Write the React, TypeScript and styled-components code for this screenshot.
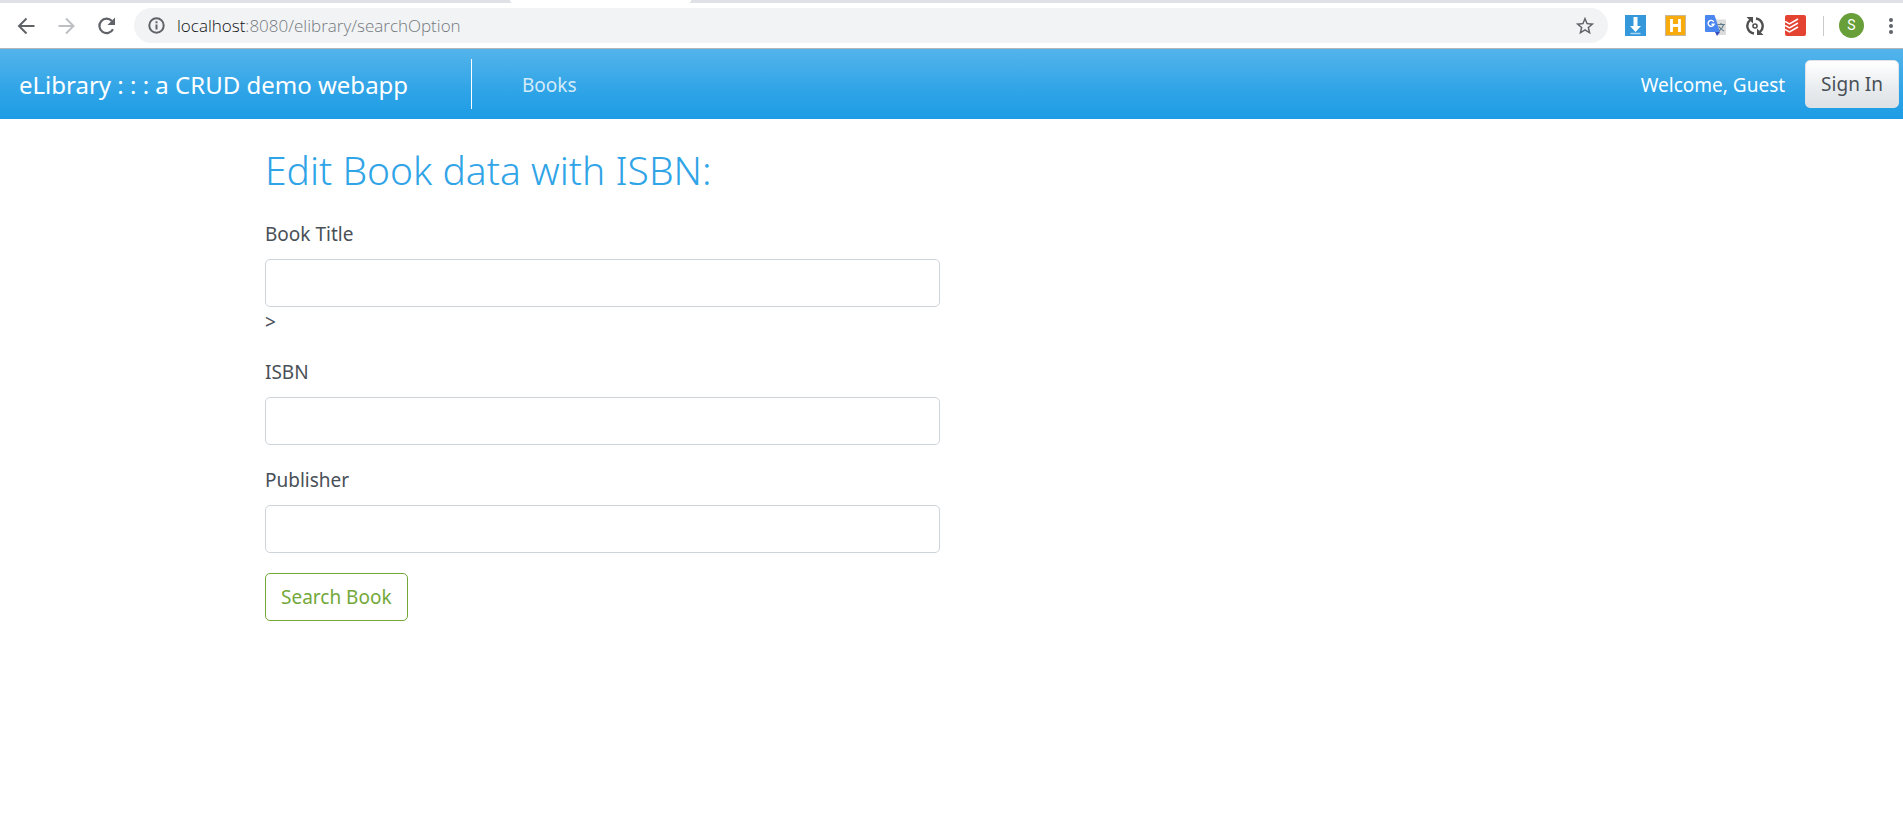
import React from 'react';
import styled, { createGlobalStyle } from 'styled-components';

const GlobalStyle = createGlobalStyle`
  *, *::before, *::after { box-sizing: border-box; }
  body {
    margin: 0;
    background: #fff;
    color: #495057;
    font-family: "Noto Sans", "Open Sans", sans-serif;
    font-size: 19px;
    line-height: 30px;
  }
  button, input { font: inherit; }
`;

const TabStrip = styled.div`
  display: flex;
  height: 3px;
  padding-left: 510px;
  background: #dee1e6;
`;

const ActiveTab = styled.div`
  width: 181px;
  background: #fff;
  border-radius: 0 0 3px 3px;
`;

const Toolbar = styled.div`
  display: flex;
  align-items: center;
  height: 46px;
  padding: 0 2px 0 16px;
  background: #fff;
  border-bottom: 1px solid #b6b4b6;
`;

const IconButton = styled.button<{ $gap?: number; $muted?: boolean }>`
  display: flex;
  flex: none;
  align-items: center;
  justify-content: center;
  width: 20px;
  height: 24px;
  margin: 0 ${p => p.$gap ?? 20}px 0 0;
  padding: 0;
  border: 0;
  background: none;
  color: ${p => (p.$muted ? '#bdbfc2' : '#5f6368')};
  svg { flex: none; }
`;

const AddressBar = styled.div`
  display: flex;
  flex: 1;
  align-items: center;
  height: 35px;
  margin-right: 17px;
  padding: 0 13px 0 14px;
  border-radius: 18px;
  background: #f1f3f4;
`;

const Address = styled.div`
  flex: 1;
  margin-left: 12px;
  color: #74797e;
  font-family: "Open Sans", "Noto Sans", sans-serif;
  font-size: 17px;
  font-weight: 300;
  line-height: 24px;
  span { color: #101114; }
`;

const Separator = styled.div`
  width: 1px;
  height: 20px;
  margin-right: 15px;
  background: #c8cacc;
`;

const Avatar = styled.button`
  flex: none;
  width: 25px;
  height: 25px;
  margin-right: 17px;
  padding: 0;
  border: 0;
  border-radius: 50%;
  background: #689f38;
  color: #fff;
  font-family: Roboto, sans-serif;
  font-size: 14px;
  line-height: 25px;
`;

const Navbar = styled.nav`
  display: flex;
  align-items: center;
  height: 70px;
  padding: 0 4px 0 19px;
  background: linear-gradient(#54b4eb, #2fa4e7 60%, #1d9ce5);
`;

const Brand = styled.a`
  width: 452px;
  padding-top: 2px;
  color: #fff;
  font-size: 24px;
  line-height: 36px;
  text-decoration: none;
`;

const NavItems = styled.div`
  display: flex;
  flex: 1;
  align-items: center;
  height: 50px;
  padding: 2px 0 0 50px;
  border-left: 1px solid #fff;
`;

const NavLink = styled.a`
  color: rgba(255, 255, 255, 0.8);
  text-decoration: none;
`;

const Welcome = styled.span`
  margin-right: 20px;
  padding-top: 2px;
  color: #fff;
`;

const SignIn = styled.button`
  height: 48px;
  padding: 0 15px;
  border: 1px solid #dfe3e7;
  border-radius: 5px;
  background: linear-gradient(#fff, #e9ecef 60%, #dde1e5);
  color: #495057;
`;

const Container = styled.main`
  max-width: 1425px;
  margin: 0 auto;
  padding: 27px 26px 0;
`;

const Title = styled.h1`
  margin: 0 0 25px;
  color: #2fa4e7;
  font-size: 39px;
  font-weight: 300;
  line-height: 48px;
`;

const Form = styled.form`
  max-width: 675px;
`;

const Field = styled.div`
  margin-bottom: 20px;
`;

const Label = styled.label`
  display: block;
  margin-bottom: 10px;
`;

const TextInput = styled.input`
  display: block;
  width: 100%;
  height: 48px;
  padding: 0 15px;
  border: 1px solid #ced4da;
  border-radius: 5px;
  background: #fff;
  color: #495057;
`;

const SearchButton = styled.button`
  height: 48px;
  padding: 0 15px;
  border: 1px solid #73a839;
  border-radius: 5px;
  background: #fff;
  color: #73a839;
`;

const BackIcon = () => (
  <svg width="20" height="20" viewBox="0 0 20 20" fill="none" stroke="currentColor" strokeWidth="2">
    <path d="M18.500 10H3.500M10.500 2.500 3 10l7.500 7.500" />
  </svg>
);

const ForwardIcon = () => (
  <svg width="20" height="20" viewBox="0 0 20 20" fill="none" stroke="currentColor" strokeWidth="2">
    <path d="M2.500 10H17M10 2.500 17.500 10 10 17.500" />
  </svg>
);

const ReloadIcon = () => (
  <svg width="20" height="20" viewBox="0 0 20 20" fill="none">
    <path d="M17 13.200A7.200 7.200 0 1 1 15.900 5" stroke="currentColor" strokeWidth="2.200" />
    <path d="M19 1.500v7.500h-7.500z" fill="currentColor" />
  </svg>
);

const InfoIcon = () => (
  <svg width="17" height="17" viewBox="0 0 17 17" fill="none" stroke="#5f6368" strokeWidth="2">
    <circle cx="8.500" cy="8.500" r="7.200" />
    <path d="M8.500 7.500v5M8.500 4.200v2" />
  </svg>
);

const StarIcon = () => (
  <svg width="22" height="22" viewBox="0 0 24 24" fill="#5f6368">
    <path d="M22 9.240l-7.190-.62L12 2 9.190 8.630 2 9.240l5.460 4.730L5.820 21 12 17.270 18.180 21l-1.630-7.030L22 9.240zM12 15.400l-3.760 2.270 1-4.280-3.320-2.880 4.380-.38L12 6.100l1.710 4.040 4.380.38-3.320 2.880 1 4.280L12 15.400z" />
  </svg>
);

const DownloadIcon = () => (
  <svg width="21" height="21" viewBox="0 0 21 21">
    <rect width="21" height="21" fill="#3498db" />
    <path d="M8.500 2h4v9H16l-5.500 6L5 11h3.500z" fill="#fff" />
    <path d="M5.500 18.500h10" stroke="#a9d5f2" strokeWidth="1.500" />
  </svg>
);

const HighlightIcon = () => (
  <svg width="21" height="21" viewBox="0 0 21 21">
    <rect x=".5" y=".5" width="20" height="20" fill="#f9ab0c" stroke="#c9b89a" />
    <path d="M6.500 4v13M14.500 4v13M6.500 10.500h8" stroke="#fff" strokeWidth="2.800" />
  </svg>
);

const TranslateIcon = () => (
  <svg width="21" height="21" viewBox="0 0 21 21" fill="none">
    <path d="M9 4.500h11a1 1 0 0 1 1 1V19a1 1 0 0 1-1 1h-7z" fill="#dcdcdc" />
    <path d="M10 17h5l-3 4z" fill="#3a4bc0" />
    <path d="M1 0h8.500l5.500 17H1a1 1 0 0 1-1-1V1a1 1 0 0 1 1-1z" fill="#4a86f0" />
    <path d="M8.800 7A3 3 0 1 0 9 9.200H6.500" stroke="#fff" strokeWidth="1.400" />
    <path d="M12.500 9.500H20M16 8v1.500M18.500 9.500c-.5 3-2.500 5-4.500 6.500M14 11.500c1 2 3 3.500 5 4.500" stroke="#607d8b" strokeWidth="1.200" />
  </svg>
);

const SyncIcon = () => (
  <svg width="20" height="20" viewBox="0 0 20 20" fill="none" stroke="#505050" strokeWidth="2.400">
    <path d="M9 17.500A7.600 7.600 0 0 1 5 4.200M11 2.500A7.600 7.600 0 0 1 15 15.800" />
    <path d="M1.500 1H8v6.500zM18.500 19H12v-6.500z" fill="#505050" stroke="none" />
    <circle cx="10" cy="10" r="2" strokeWidth="1.600" />
  </svg>
);

const TodoIcon = () => (
  <svg width="21" height="21" viewBox="0 0 21 21" fill="none">
    <rect width="21" height="21" rx="2" fill="#e44332" />
    <path d="M0 6.500 4.500 9 13 4M0 10.500 4.500 13 13 8M0 14.500 4.500 17 13 12" stroke="#fff" strokeWidth="1.500" />
  </svg>
);

const MenuIcon = () => (
  <svg width="6" height="18" viewBox="0 0 6 18" fill="#5f6368">
    <circle cx="3" cy="3" r="2" />
    <circle cx="3" cy="9" r="2" />
    <circle cx="3" cy="15" r="2" />
  </svg>
);

const Browser = () => (
  <header>
    <TabStrip><ActiveTab /></TabStrip>
    <Toolbar>
      <IconButton aria-label="Back"><BackIcon /></IconButton>
      <IconButton aria-label="Forward" $muted><ForwardIcon /></IconButton>
      <IconButton aria-label="Reload" $gap={18}><ReloadIcon /></IconButton>
      <AddressBar>
        <InfoIcon />
        <Address><span>localhost</span>:8080/elibrary/searchOption</Address>
        <IconButton aria-label="Bookmark" $gap={0}><StarIcon /></IconButton>
      </AddressBar>
      <IconButton aria-label="Download"><DownloadIcon /></IconButton>
      <IconButton aria-label="Highlight"><HighlightIcon /></IconButton>
      <IconButton aria-label="Translate"><TranslateIcon /></IconButton>
      <IconButton aria-label="Sync"><SyncIcon /></IconButton>
      <IconButton aria-label="Tasks" $gap={18}><TodoIcon /></IconButton>
      <Separator />
      <Avatar>S</Avatar>
      <IconButton aria-label="Menu" $gap={0}><MenuIcon /></IconButton>
    </Toolbar>
  </header>
);

export default function App() {
  return (
    <>
      <GlobalStyle />
      <Browser />
      <Navbar>
        <Brand href="#">eLibrary : : : a CRUD demo webapp</Brand>
        <NavItems>
          <NavLink href="#">Books</NavLink>
        </NavItems>
        <Welcome>Welcome, Guest</Welcome>
        <SignIn type="button">Sign In</SignIn>
      </Navbar>
      <Container>
        <Title>Edit Book data with ISBN:</Title>
        <Form onSubmit={e => e.preventDefault()}>
          <Field>
            <Label htmlFor="title">Book Title</Label>
            <TextInput id="title" type="text" />
            &gt;
          </Field>
          <Field>
            <Label htmlFor="isbn">ISBN</Label>
            <TextInput id="isbn" type="text" />
          </Field>
          <Field>
            <Label htmlFor="publisher">Publisher</Label>
            <TextInput id="publisher" type="text" />
          </Field>
          <SearchButton type="submit">Search Book</SearchButton>
        </Form>
      </Container>
    </>
  );
}
